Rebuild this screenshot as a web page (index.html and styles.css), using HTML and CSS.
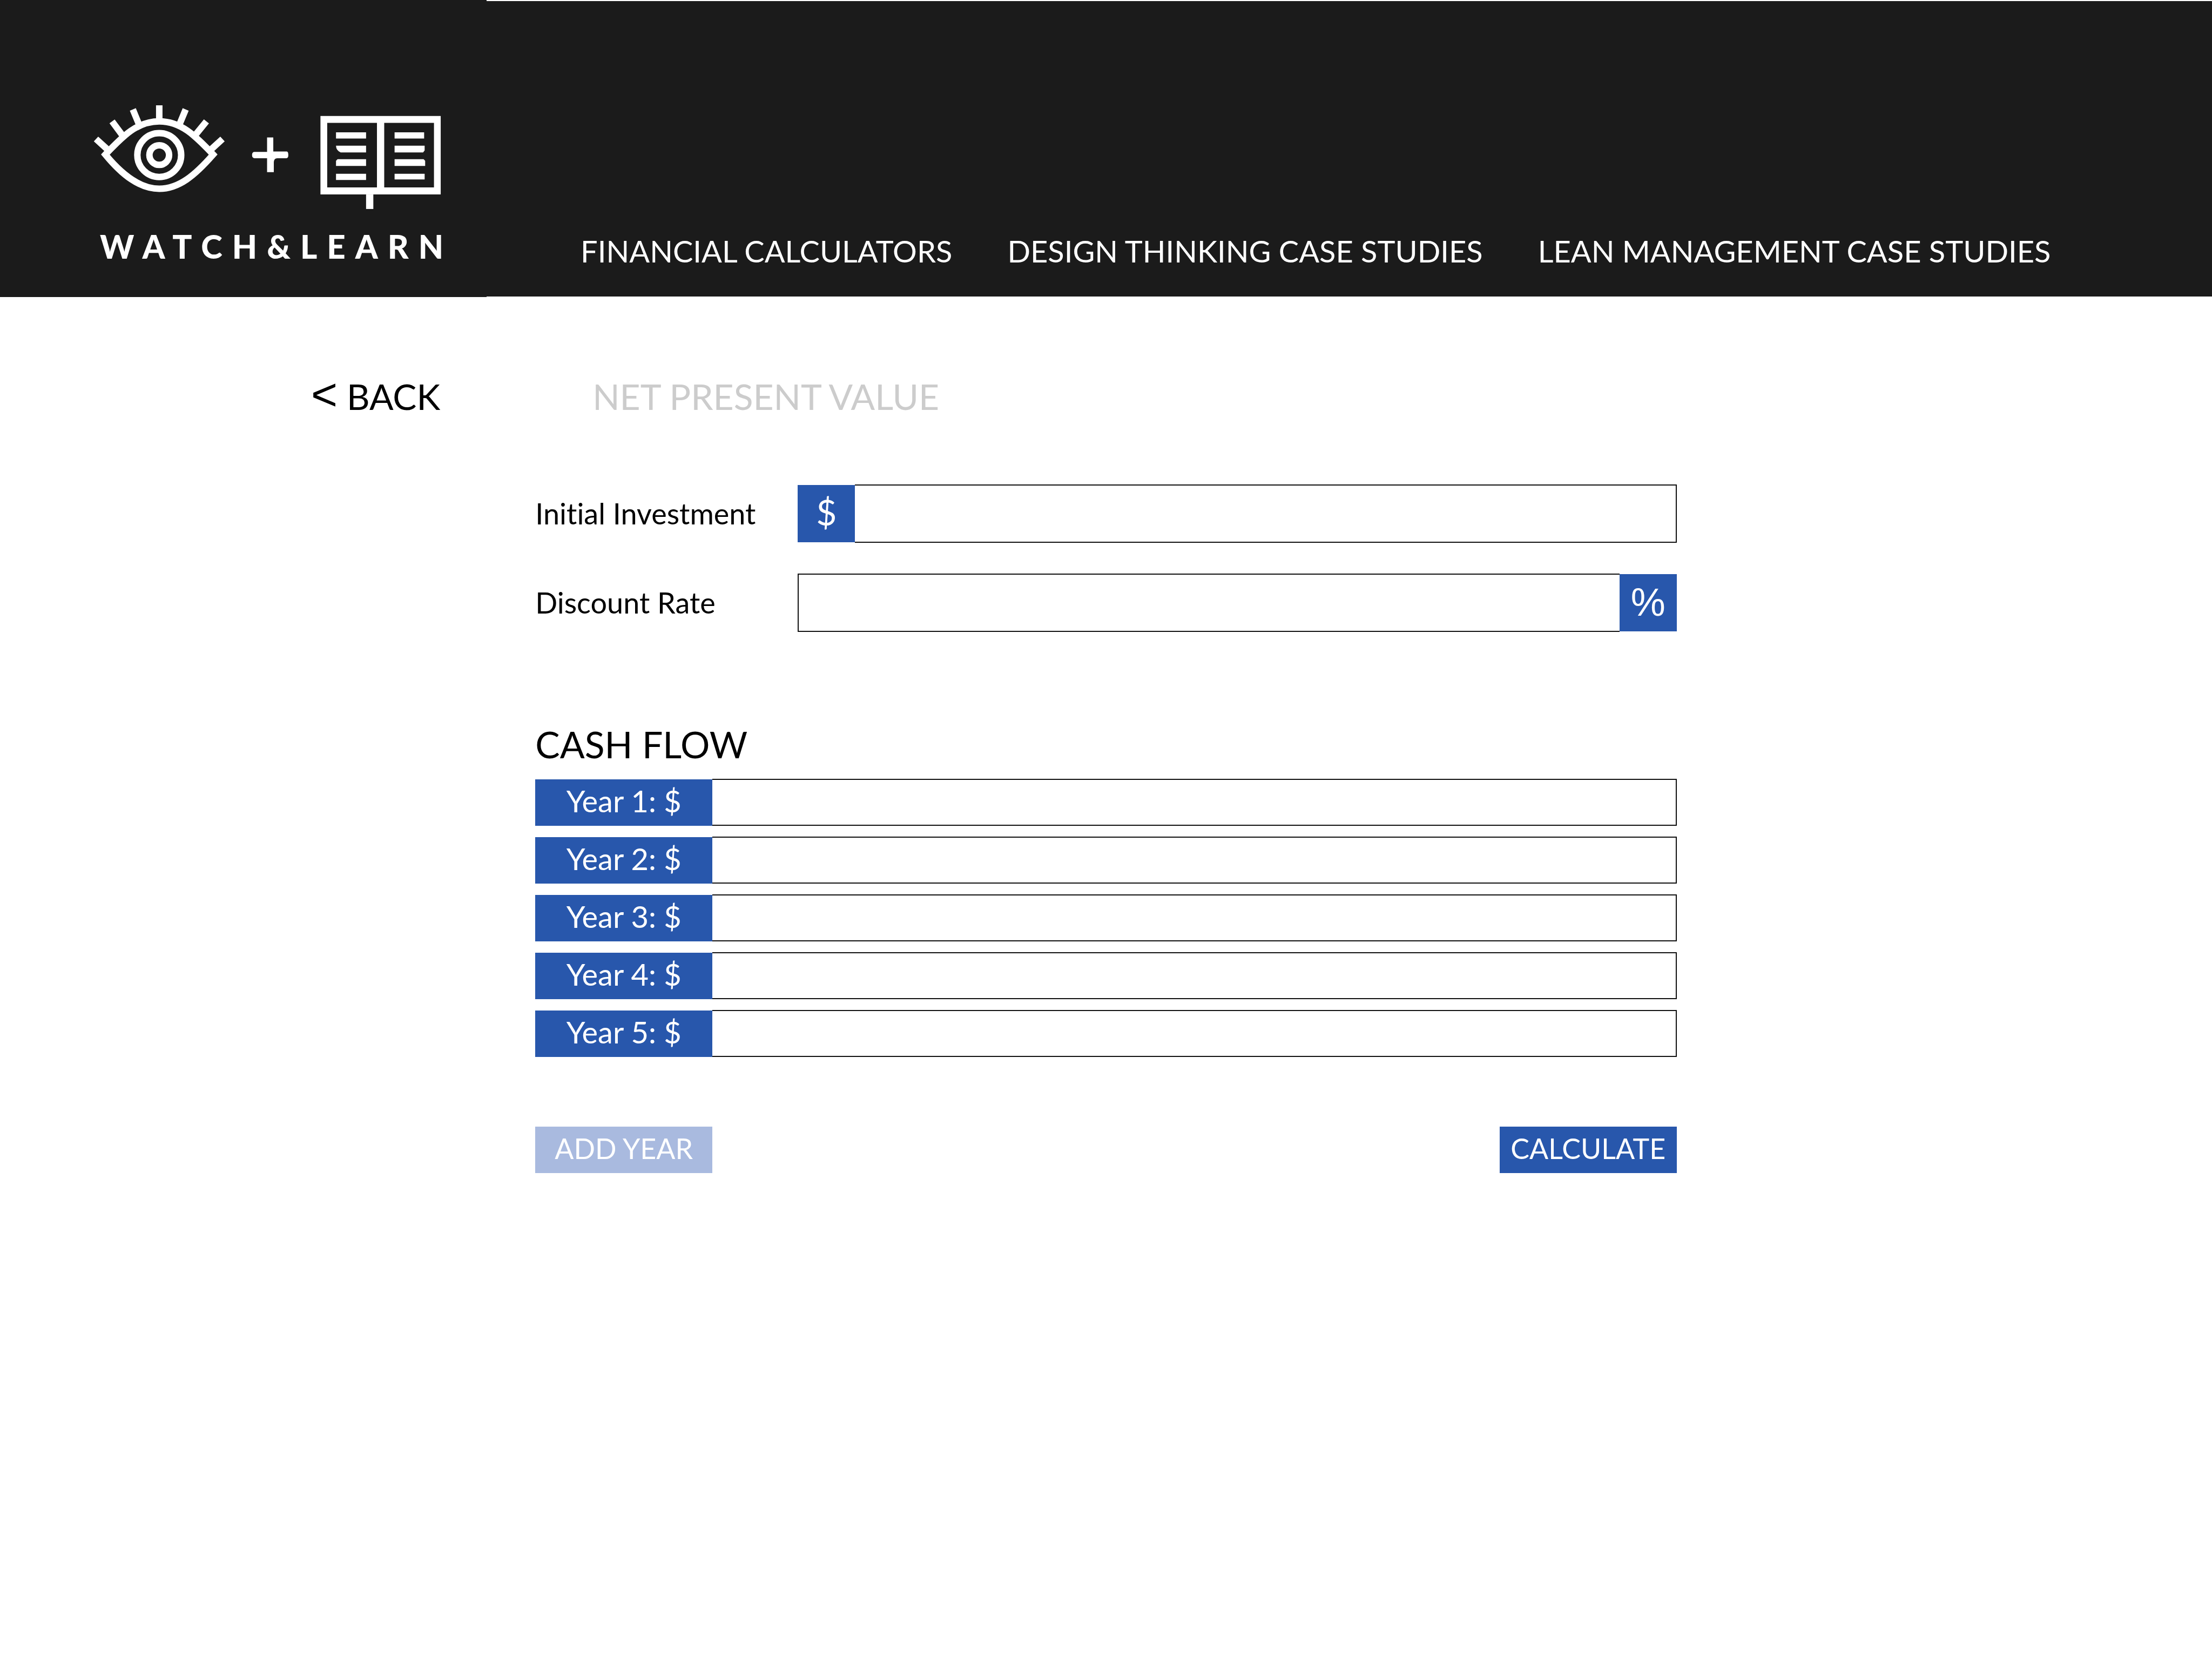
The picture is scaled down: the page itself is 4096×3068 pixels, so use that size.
FILE: index.html
```html
<!DOCTYPE html>
<html lang="en">
<head>
<meta charset="utf-8">
<title>Net Present Value – Watch &amp; Learn</title>
<link rel="stylesheet" href="styles.css">
</head>
<body>
<header class="site-header">
  <a class="brand" href="#">
    <svg class="brand-mark" viewBox="180 200 672 204" aria-hidden="true">
      <g fill="none" stroke="#fff" stroke-width="12.5">
        <path d="M203 298C238 261 265 234 307 234S376 261 411 298C376 338 345 364 307 364S235 337 203 298Z"/>
        <circle cx="307" cy="299" r="42.3"/>
        <circle cx="307" cy="299" r="19"/>
        <path d="M307 203V232M256 211L268 240M358 211L346 240M216 234L236 261M398 234L376 261M185 268L208 289M429 268L406 289"/>
      </g>
      <g fill="#fff">
        <path d="M515 265h12v27h26q3 0 3 7t-5 6h-16q-7 0-7 9v18h-13v-27h-24q-5 0-5-6t5-6h24z"/>
        <path fill-rule="evenodd" d="M618 223.500H850V375H618ZM631 237V361.500H727V237ZM741 237V361.500H837V237Z"/>
        <path d="M706 375h14v28h-14z"/>
        <path d="M648 255h58v12h-58zM648 281h58v13h-49q-9-4-9-13zM651 307h55v13h-58v-10zM648 335h58v12h-58z"/>
        <path d="M761 255h57v12h-57zM761 281h58v9l-3 4h-55zM761 307h56l3 3v10h-59zM761 335h58v11h-58z"/>
      </g>
    </svg>
    <span class="brand-name">WATCH&amp;LEARN</span>
  </a>
  <nav class="site-nav" aria-label="Main">
    <a href="#">FINANCIAL CALCULATORS</a>
    <a href="#">DESIGN THINKING CASE STUDIES</a>
    <a href="#">LEAN MANAGEMENT CASE STUDIES</a>
  </nav>
</header>

<main>
  <div class="title-row">
    <a class="back" href="#"><span class="chevron">&lt;</span> BACK</a>
    <h1>NET PRESENT VALUE</h1>
  </div>

  <form class="calculator">
    <div class="field">
      <label for="investment">Initial Investment</label>
      <div class="group">
        <span class="unit">$</span>
        <input class="after" id="investment" type="text">
      </div>
    </div>
    <div class="field">
      <label for="rate">Discount Rate</label>
      <div class="group">
        <input class="before" id="rate" type="text">
        <span class="unit percent">%</span>
      </div>
    </div>

    <h2>CASH FLOW</h2>
    <div class="years">
      <div class="year"><label for="year1">Year 1: $</label><input class="after" id="year1" type="text"></div>
      <div class="year"><label for="year2">Year 2: $</label><input class="after" id="year2" type="text"></div>
      <div class="year"><label for="year3">Year 3: $</label><input class="after" id="year3" type="text"></div>
      <div class="year"><label for="year4">Year 4: $</label><input class="after" id="year4" type="text"></div>
      <div class="year"><label for="year5">Year 5: $</label><input class="after" id="year5" type="text"></div>
    </div>

    <div class="actions">
      <button class="secondary" type="button">ADD YEAR</button>
      <button type="submit">CALCULATE</button>
    </div>
  </form>
</main>
</body>
</html>
```
FILE: styles.css
```css
* {
  box-sizing: border-box;
}

body {
  margin: 0;
  background: #fff;
  color: #000;
  font: 52px/64px Lato, sans-serif;
  font-variant-ligatures: none;
}

a {
  color: inherit;
  text-decoration: none;
}

/* Header */
.site-header {
  display: flex;
  align-items: flex-start;
  color: #fff;
}

.brand {
  width: 22%;
  height: 550px;
  padding: 192px 0 0 173px;
  background: #1b1b1b;
}

.brand-mark {
  display: block;
  width: 645px;
  height: 196px;
}

.brand-name {
  display: block;
  margin: 32px 0 0 12px;
  font-weight: 900;
  font-size: 60px;
  line-height: 72px;
  letter-spacing: 18px;
}

.site-nav {
  flex: 1;
  display: flex;
  gap: 102px;
  height: 547px;
  margin-top: 2px;
  padding: 427px 0 0 174px;
  background: #1b1b1b;
  font-size: 56px;
  line-height: 72px;
  white-space: nowrap;
}

/* Page title */
.title-row {
  display: grid;
  grid-template-columns: 20% 1fr;
  column-gap: 278px;
  padding-top: 144px;
  font-size: 66px;
  line-height: 80px;
}

.back {
  padding-right: 4px;
  text-align: right;
}

.chevron {
  font-family: "Liberation Sans", sans-serif;
  font-size: 84px;
  line-height: 64px;
}

h1,
h2 {
  margin: 0;
  font-weight: 400;
  font-size: 66px;
  line-height: 80px;
}

h1 {
  color: #ccc;
}

/* Calculator form */
.calculator {
  width: 51.6%;
  margin: 0 auto;
  padding-top: 123px;
}

.field {
  display: grid;
  grid-template-columns: 23% 1fr;
  align-items: center;
  margin-bottom: 57px;
}

.field label {
  font-size: 54px;
}

.group,
.year {
  display: flex;
}

input {
  flex: 1;
  min-width: 0;
  height: 108px;
  padding: 0 24px;
  border: 2px solid #111;
  border-radius: 0;
  background: #fff;
  font: inherit;
}

.after {
  border-left: 0;
}

.before {
  border-right: 0;
}

.unit {
  width: 106px;
  margin: 1px 0;
  padding-bottom: 6px;
  background: #2857ac;
  color: #fff;
  font-size: 66px;
  line-height: 100px;
  text-align: center;
}

.percent {
  padding-bottom: 2px;
  font-family: "Liberation Sans", sans-serif;
  font-size: 72px;
  line-height: 104px;
}

h2 {
  margin-top: 168px;
  font-size: 68px;
}

.years {
  display: grid;
  gap: 20px;
  margin-top: 24px;
}

.year input {
  height: 87px;
}

.year label,
button {
  width: 328px;
  padding: 0 0 6px;
  background: #2857ac;
  color: #fff;
  font: inherit;
  line-height: 80px;
  text-align: center;
}

.year label {
  margin: 1px 0 0;
  font-size: 56px;
}

.actions {
  display: flex;
  justify-content: space-between;
  margin-top: 129px;
}

button {
  border: 0;
}

button.secondary {
  background: #a9badf;
}
```
